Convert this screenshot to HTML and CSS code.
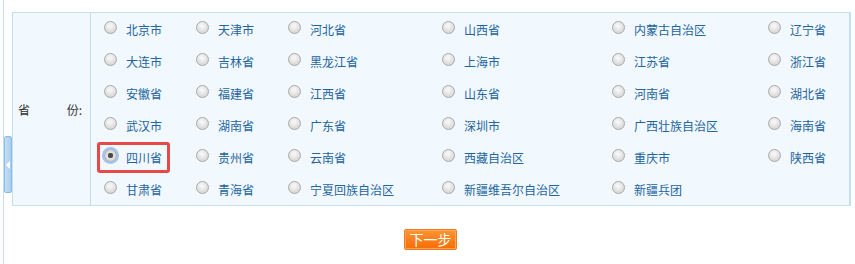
FILE: index.html
```html
<!DOCTYPE html>
<html lang="zh-CN">
<head>
  <meta charset="UTF-8">
  <title>选择省份</title>
  <link rel="stylesheet" href="styles.css">
</head>
<body>

  <div class="frame">
    <div class="toggle"><span class="arrow"></span></div>

    <div class="province-box">
      <div class="label"><span>省</span><span>份:</span></div>
      <div class="options">
        <label class="option"><input type="radio" name="sf"><span>北京市</span></label>
        <label class="option"><input type="radio" name="sf"><span>天津市</span></label>
        <label class="option"><input type="radio" name="sf"><span>河北省</span></label>
        <label class="option"><input type="radio" name="sf"><span>山西省</span></label>
        <label class="option"><input type="radio" name="sf"><span>内蒙古自治区</span></label>
        <label class="option"><input type="radio" name="sf"><span>辽宁省</span></label>

        <label class="option"><input type="radio" name="sf"><span>大连市</span></label>
        <label class="option"><input type="radio" name="sf"><span>吉林省</span></label>
        <label class="option"><input type="radio" name="sf"><span>黑龙江省</span></label>
        <label class="option"><input type="radio" name="sf"><span>上海市</span></label>
        <label class="option"><input type="radio" name="sf"><span>江苏省</span></label>
        <label class="option"><input type="radio" name="sf"><span>浙江省</span></label>

        <label class="option"><input type="radio" name="sf"><span>安徽省</span></label>
        <label class="option"><input type="radio" name="sf"><span>福建省</span></label>
        <label class="option"><input type="radio" name="sf"><span>江西省</span></label>
        <label class="option"><input type="radio" name="sf"><span>山东省</span></label>
        <label class="option"><input type="radio" name="sf"><span>河南省</span></label>
        <label class="option"><input type="radio" name="sf"><span>湖北省</span></label>

        <label class="option"><input type="radio" name="sf"><span>武汉市</span></label>
        <label class="option"><input type="radio" name="sf"><span>湖南省</span></label>
        <label class="option"><input type="radio" name="sf"><span>广东省</span></label>
        <label class="option"><input type="radio" name="sf"><span>深圳市</span></label>
        <label class="option"><input type="radio" name="sf"><span>广西壮族自治区</span></label>
        <label class="option"><input type="radio" name="sf"><span>海南省</span></label>

        <label class="option marked"><input type="radio" name="sf" checked><span>四川省</span></label>
        <label class="option"><input type="radio" name="sf"><span>贵州省</span></label>
        <label class="option"><input type="radio" name="sf"><span>云南省</span></label>
        <label class="option"><input type="radio" name="sf"><span>西藏自治区</span></label>
        <label class="option"><input type="radio" name="sf"><span>重庆市</span></label>
        <label class="option"><input type="radio" name="sf"><span>陕西省</span></label>

        <label class="option"><input type="radio" name="sf"><span>甘肃省</span></label>
        <label class="option"><input type="radio" name="sf"><span>青海省</span></label>
        <label class="option"><input type="radio" name="sf"><span>宁夏回族自治区</span></label>
        <label class="option"><input type="radio" name="sf"><span>新疆维吾尔自治区</span></label>
        <label class="option"><input type="radio" name="sf"><span>新疆兵团</span></label>
      </div>
    </div>

    <div class="btns">
      <button class="btn-next">下一步</button>
    </div>
  </div>

</body>
</html>
```

FILE: styles.css
```css
body {
  margin: 0;
  font-family: "Noto Sans CJK SC", "Noto Sans", sans-serif;
  font-size: 12px;
  background-color: #ffffff;
}

.frame {
  position: relative;
  margin-left: 3px;
  border-left: 1px solid #c6def2;
  padding: 12px 4px 0 8px;
  min-height: 252px;
}

.toggle {
  position: absolute;
  left: 0;
  top: 136px;
  width: 6px;
  height: 55px;
  border: 1px solid #8fbbe6;
  border-radius: 2px;
  background: linear-gradient(to right, #c4def6, #a9cdf0);
}

.toggle .arrow {
  position: absolute;
  left: 1px;
  top: 24px;
  width: 0;
  height: 0;
  border-top: 4px solid transparent;
  border-bottom: 4px solid transparent;
  border-right: 4px solid #ffffff;
}

.province-box {
  display: flex;
  border: 1px solid #c4e0f4;
  border-right-width: 2px;
  background-color: #f2f9fe;
}

.label {
  width: 64px;
  flex-shrink: 0;
  display: flex;
  justify-content: space-between;
  align-items: center;
  padding: 0 8px 0 5px;
  border-right: 1px solid #c4e0f4;
  color: #333333;
}

.options {
  flex: 1;
  display: grid;
  grid-template-columns: 92px 92px 154px 170px 156px 1fr;
  grid-auto-rows: 32px;
  padding-left: 13px;
}

.option {
  position: relative;
  display: flex;
  align-items: flex-start;
  gap: 9px;
  color: #22649f;
  cursor: pointer;
}

.option span {
  line-height: 32px;
  padding-top: 1px;
  white-space: nowrap;
}

.option input {
  appearance: none;
  -webkit-appearance: none;
  margin: 8px 0 0 0;
  width: 13px;
  height: 13px;
  flex-shrink: 0;
  border: 1px solid #a9a9a9;
  border-radius: 50%;
  background: radial-gradient(circle at 45% 35%, #fbfbfb 0%, #e6e6e6 45%, #cbcbcb 100%);
  box-sizing: border-box;
}

.option input:checked {
  background: radial-gradient(circle, #444444 0, #555555 2.5px, #e2e2e2 3px, #cbcbcb 100%);
  outline: 2px solid #9ec2f2;
  outline-offset: 0;
  box-shadow: 0 0 0 1px #c9defa;
}

.option.marked::after {
  content: "";
  position: absolute;
  left: -7px;
  top: 1px;
  width: 67px;
  height: 25px;
  border: 3px solid #e84848;
  border-radius: 3px;
  pointer-events: none;
}

.btns {
  margin-top: 23px;
  text-align: center;
  padding-right: 2px;
}

.btn-next {
  width: 53px;
  height: 21px;
  padding: 0;
  font-family: "Noto Sans CJK SC", sans-serif;
  font-size: 14px;
  line-height: 19px;
  color: #ffffff;
  border: 1px solid #ef7a1d;
  border-radius: 2px;
  background: linear-gradient(to bottom, #ff9434, #f66d04);
  box-shadow: inset 0 0 0 1px #ffa555;
  cursor: pointer;
}

.btn-next:hover {
  background: linear-gradient(to bottom, #ff8a20, #e86000);
}
```
